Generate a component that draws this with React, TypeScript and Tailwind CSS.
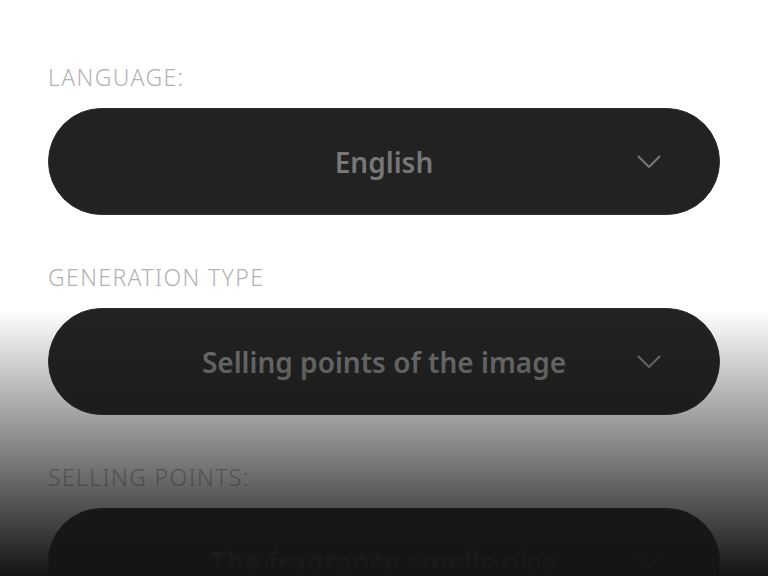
import React from "react";

type Field = {
  label: string;
  value: string;
};

const fields: Field[] = [
  { label: "LANGUAGE:", value: "English" },
  { label: "GENERATION TYPE", value: "Selling points of the image" },
  { label: "SELLING POINTS:", value: "The fragrance smells nice" },
];

export default function App() {
  return (
    <div className="relative h-[576px] w-[768px] overflow-hidden bg-white font-['Noto_Sans',sans-serif]">
      <div className="flex flex-col gap-[48px] px-12 pt-[63px]">
        {fields.map((f) => (
          <div key={f.label} className="flex flex-col gap-[17px]">
            <div className="text-[23px] font-light leading-[28px] tracking-[0.06em] text-[#b3b3b3]">
              {f.label}
            </div>
            <button className="relative flex h-[107px] w-full shrink-0 items-center justify-center rounded-full border border-[#2c2c2c] bg-[#222222]">
              <span className="text-[28px] font-semibold text-[#777777]">
                {f.value}
              </span>
              <svg
                className="absolute right-[58px] top-1/2 -translate-y-1/2"
                width="24"
                height="14"
                viewBox="0 0 24 14"
                fill="none"
              >
                <path
                  d="M1.5 1.5 L12 12 L22.5 1.5"
                  stroke="#777777"
                  strokeWidth="2"
                  strokeLinecap="round"
                  strokeLinejoin="round"
                />
              </svg>
            </button>
          </div>
        ))}
      </div>
      {/* bottom fade over the form */}
      <div className="pointer-events-none absolute inset-x-0 bottom-0 h-[266px] bg-gradient-to-b from-[#14141400] to-[#141414]" />
    </div>
  );
}
